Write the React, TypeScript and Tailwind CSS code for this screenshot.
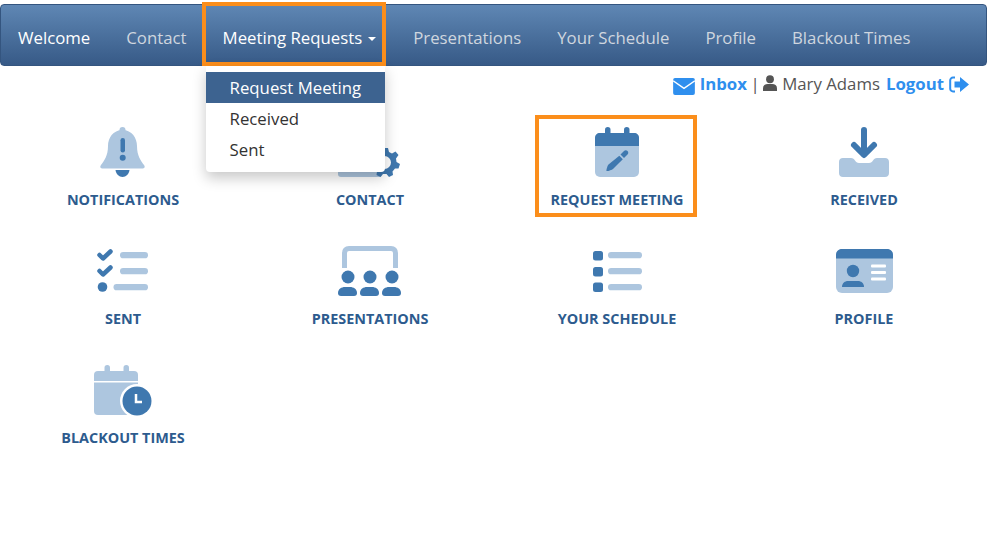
import React from "react";

const L = "#adc6df";
const D = "#3f78af";

function Svg({ children }: { children: React.ReactNode }) {
  return (
    <svg width="70" height="56" viewBox="0 0 70 56" className="block">
      {children}
    </svg>
  );
}

const BellIcon = () => (
  <Svg>
    <circle cx="34.5" cy="6" r="3" fill={L} />
    <path d="M34.5 6C25 6 20 14 20 22C20 32 16 37 13 41C11.500 43 12.500 44.500 15 44.500H54C56.500 44.500 57.500 43 56 41C53 37 49 32 49 22C49 14 44 6 34.500 6Z" fill={L} />
    <path d="M27.500 46H41.500C41 50 38 53 34.500 53C31 53 28 50 27.500 46Z" fill={D} />
    <rect x="32.500" y="14" width="4.500" height="14.500" rx="2.200" fill={D} />
    <circle cx="34.700" cy="33.700" r="3" fill={D} />
  </Svg>
);

const ContactIcon = () => (
  <Svg>
    <rect x="3" y="6" width="44" height="47" rx="3" fill={L} />
    <path d="M49 24L53 24L54 28L57 29.500L60.500 27.500L63.500 31L61 34.500L61.500 38L65 40L63.500 44.500L60 44.500L57.500 47.500L58 51L54 53L51.500 50L48 50L45.500 53L41.500 51L42 47.500L39.500 44.500L36 44.500L34.500 40L38 38L38.500 34.500L36 31L39 27.500L42.500 29.500L45.500 28Z" fill={D} />
    <circle cx="49.500" cy="38.500" r="6.500" fill="#fff" />
  </Svg>
);

const CalendarPenIcon = () => (
  <Svg>
    <rect x="13" y="9" width="44" height="44" rx="5" fill={L} />
    <path d="M13 22V14C13 11 15 9 18 9H52C55 9 57 11 57 14V22Z" fill={D} />
    <rect x="23" y="3" width="5.500" height="10" rx="2.750" fill={D} />
    <rect x="42" y="3" width="5.500" height="10" rx="2.750" fill={D} />
    <path d="M38.500 30.500L42 27C43 26 44.500 26 45.500 27C46.500 28 46.500 29.500 45.500 30.500L42 34Z" fill={D} />
    <path d="M37.300 31.700L40.800 35.200L31 45C30 46 25 47.500 24.500 47C24 46.500 25.500 41.500 26.500 40.500Z" fill={D} />
  </Svg>
);

const InboxIcon = () => (
  <Svg>
    <path d="M14 34H22C24 34 25 35 26 36.500C27 38 28 39 30 39H40C42 39 43 38 44 36.500C45 35 46 34 48 34H56C58.500 34 60 35.500 60 38V49C60 51.500 58.500 53 56 53H14C11.500 53 10 51.500 10 49V38C10 35.500 11.500 34 14 34Z" fill={L} />
    <path d="M35 6V29M25 21L35 31L45 21" fill="none" stroke={D} strokeWidth="6" strokeLinecap="round" strokeLinejoin="round" />
  </Svg>
);

const ChecklistIcon = () => (
  <Svg>
    <path d="M11.500 12L15 15.500L22.500 8.500M11.500 28L15 31.500L22.500 24.500" fill="none" stroke={D} strokeWidth="4.500" strokeLinecap="round" strokeLinejoin="round" />
    <circle cx="14.500" cy="44" r="4.800" fill={D} />
    <rect x="32" y="9" width="28" height="6.300" rx="3.100" fill={L} />
    <rect x="32" y="25" width="28" height="6.300" rx="3.100" fill={L} />
    <rect x="25.500" y="41" width="34.500" height="6.300" rx="3.100" fill={L} />
  </Svg>
);

const PresentationIcon = () => (
  <Svg>
    <path d="M9.500 25V10C9.500 7.500 11 5.500 14 5.500H56C59 5.500 60.500 7.500 60.500 10V25" fill="none" stroke={L} strokeWidth="5" />
    <circle cx="13" cy="34" r="6.500" fill={D} />
    <circle cx="35" cy="34" r="6.500" fill={D} />
    <circle cx="57" cy="34" r="6.500" fill={D} />
    <path d="M3 50C3 46 6.500 44 10 44H15C18.500 44 22 46 22 50C22 52 21 53 19 53H6C4 53 3 52 3 50Z" fill={D} />
    <path d="M25 50C25 46 28.500 44 32 44H37C40.500 44 44 46 44 50C44 52 43 53 41 53H28C26 53 25 52 25 50Z" fill={D} />
    <path d="M47 50C47 46 50.500 44 54 44H59C62.500 44 66 46 66 50C66 52 65 53 63 53H50C48 53 47 52 47 50Z" fill={D} />
  </Svg>
);

const ListIcon = () => (
  <Svg>
    <rect x="11" y="8" width="10" height="9.500" rx="2.500" fill={D} />
    <rect x="11" y="24" width="10" height="9.500" rx="2.500" fill={D} />
    <rect x="11" y="39.500" width="10" height="9.500" rx="2.500" fill={D} />
    <rect x="26" y="9" width="34" height="6.300" rx="3.100" fill={L} />
    <rect x="26" y="25" width="34" height="6.300" rx="3.100" fill={L} />
    <rect x="26" y="41" width="34" height="6.300" rx="3.100" fill={L} />
  </Svg>
);

const ProfileIcon = () => (
  <Svg>
    <rect x="7" y="6" width="57" height="44" rx="6" fill={L} />
    <path d="M7 15.500V12C7 8.500 9.500 6 13 6H58C61.500 6 64 8.500 64 12V15.500Z" fill={D} />
    <circle cx="24" cy="28" r="6.200" fill={D} />
    <path d="M13 44C13 40 16 38 19 38H29C32 38 35 40 35 44Z" fill={D} />
    <rect x="42" y="21.500" width="15" height="3" rx="1" fill="#fff" />
    <rect x="42" y="28" width="15" height="3" rx="1" fill="#fff" />
    <rect x="42" y="34.500" width="15" height="3" rx="1" fill="#fff" />
  </Svg>
);

const BlackoutIcon = () => (
  <Svg>
    <rect x="6" y="9" width="44" height="44" rx="4" fill={L} />
    <rect x="6" y="19" width="44" height="1.500" fill="#fff" />
    <rect x="16.500" y="3" width="5.500" height="9" rx="2.700" fill={L} />
    <rect x="35.500" y="3" width="5.500" height="9" rx="2.700" fill={L} />
    <circle cx="49" cy="39" r="17" fill="#fff" />
    <circle cx="49" cy="39" r="14.500" fill={D} />
    <path d="M48 32V40H54" fill="none" stroke="#fff" strokeWidth="2.500" />
  </Svg>
);

const tiles: { label: string; Icon: () => React.JSX.Element; marked?: boolean }[] = [
  { label: "NOTIFICATIONS", Icon: BellIcon },
  { label: "CONTACT", Icon: ContactIcon },
  { label: "REQUEST MEETING", Icon: CalendarPenIcon, marked: true },
  { label: "RECEIVED", Icon: InboxIcon },
  { label: "SENT", Icon: ChecklistIcon },
  { label: "PRESENTATIONS", Icon: PresentationIcon },
  { label: "YOUR SCHEDULE", Icon: ListIcon },
  { label: "PROFILE", Icon: ProfileIcon },
  { label: "BLACKOUT TIMES", Icon: BlackoutIcon },
];

function NavItem({ label, active }: { label: string; active?: boolean }) {
  return (
    <a className={`flex h-full items-center px-[18px] pt-[5px] ${active ? "text-white" : "text-[#cfd6df]"}`}>{label}</a>
  );
}

export default function App() {
  return (
    <div className="min-h-[559px] overflow-hidden bg-white pt-1 text-[16.8px] leading-5 text-[#333] [font-family:'Open_Sans',sans-serif]">
      <nav className="relative z-10 flex h-[62px] items-center rounded-[4px] border border-[#34557f] bg-gradient-to-b from-[#5f87b4] to-[#375a87]">
        <div className="-ml-px flex h-full items-center">
          <NavItem label="Welcome" active />
          <NavItem label="Contact" />
          <div className="relative mr-px flex h-full items-center px-[18px] pt-[5px] text-white">
            <span>Meeting Requests</span>
            <span className="ml-[6px] mt-[2px] h-0 w-0 border-x-[4px] border-t-[4px] border-x-transparent border-t-white" />
            <div className="pointer-events-none absolute -bottom-[1px] -left-[3px] -top-[3px] right-[8px] border-[4.5px] border-[#fb8e1b]" />
            <div className="absolute left-[1px] top-[61px] w-[179px] rounded-b-[4px] bg-white pb-[7px] pt-[6px] text-[#333] shadow-[0_6px_14px_rgba(0,0,0,0.22)]">
              <div className="flex h-[31px] items-center bg-[#3d6390] pl-6 text-white">Request Meeting</div>
              <div className="flex h-[31px] items-center pl-6">Received</div>
              <div className="flex h-[31px] items-center pl-6">Sent</div>
            </div>
          </div>
          <NavItem label="Presentations" />
          <NavItem label="Your Schedule" />
          <NavItem label="Profile" />
          <NavItem label="Blackout Times" />
        </div>
      </nav>

      <div className="flex h-[58px] items-start justify-end pr-[18px] pt-2 text-[#555]">
        <svg width="22" height="17" viewBox="0 0 23 18" className="mt-[4px]">
          <rect width="23" height="18" rx="2" fill="#2f8fee" />
          <path d="M0 3L11.500 11L23 3" fill="none" stroke="#fff" strokeWidth="1.500" />
        </svg>
        <span className="ml-[5px] font-bold text-[#2f8fee]">Inbox</span>
        <span className="ml-[3.500px]">|</span>
        <svg width="14" height="16" viewBox="0 0 15 17" className="ml-[3.500px] mt-[1px]">
          <circle cx="7.500" cy="4.500" r="4.200" fill="#555" />
          <path d="M0 17V14C0 11 2.500 9.500 5 9.500H10C12.500 9.500 15 11 15 14V17Z" fill="#555" />
        </svg>
        <span className="ml-[5px]">Mary Adams</span>
        <span className="ml-[6px] font-bold text-[#2f8fee]">Logout</span>
        <svg width="20" height="17" viewBox="0 0 20 17" className="ml-[5px] mt-[2px]">
          <path d="M6 1.500H4C2.500 1.500 1.200 2.800 1.200 4.300V12.700C1.200 14.200 2.500 15.500 4 15.500H6" fill="none" stroke="#2f8fee" strokeWidth="2" />
          <path d="M5.500 5.500H11V1L20 8.500L11 16V11.500H5.500Z" fill="#2f8fee" />
        </svg>
      </div>

      <div className="-ml-[0.5px] grid grid-cols-[repeat(4,247px)]">
        {tiles.map(({ label, Icon, marked }) => (
          <div key={label} className="relative flex h-[119px] flex-col items-center">
            <Icon />
            <div className="mt-[10px] text-[14.4px] font-bold leading-5 text-[#2d5b8e]">{label}</div>
            {marked && (
              <div className="pointer-events-none absolute left-[50%] top-[-9px] ml-[-82px] h-[102px] w-[162px] border-[4.5px] border-[#fb8e1b]" />
            )}
          </div>
        ))}
      </div>
    </div>
  );
}
